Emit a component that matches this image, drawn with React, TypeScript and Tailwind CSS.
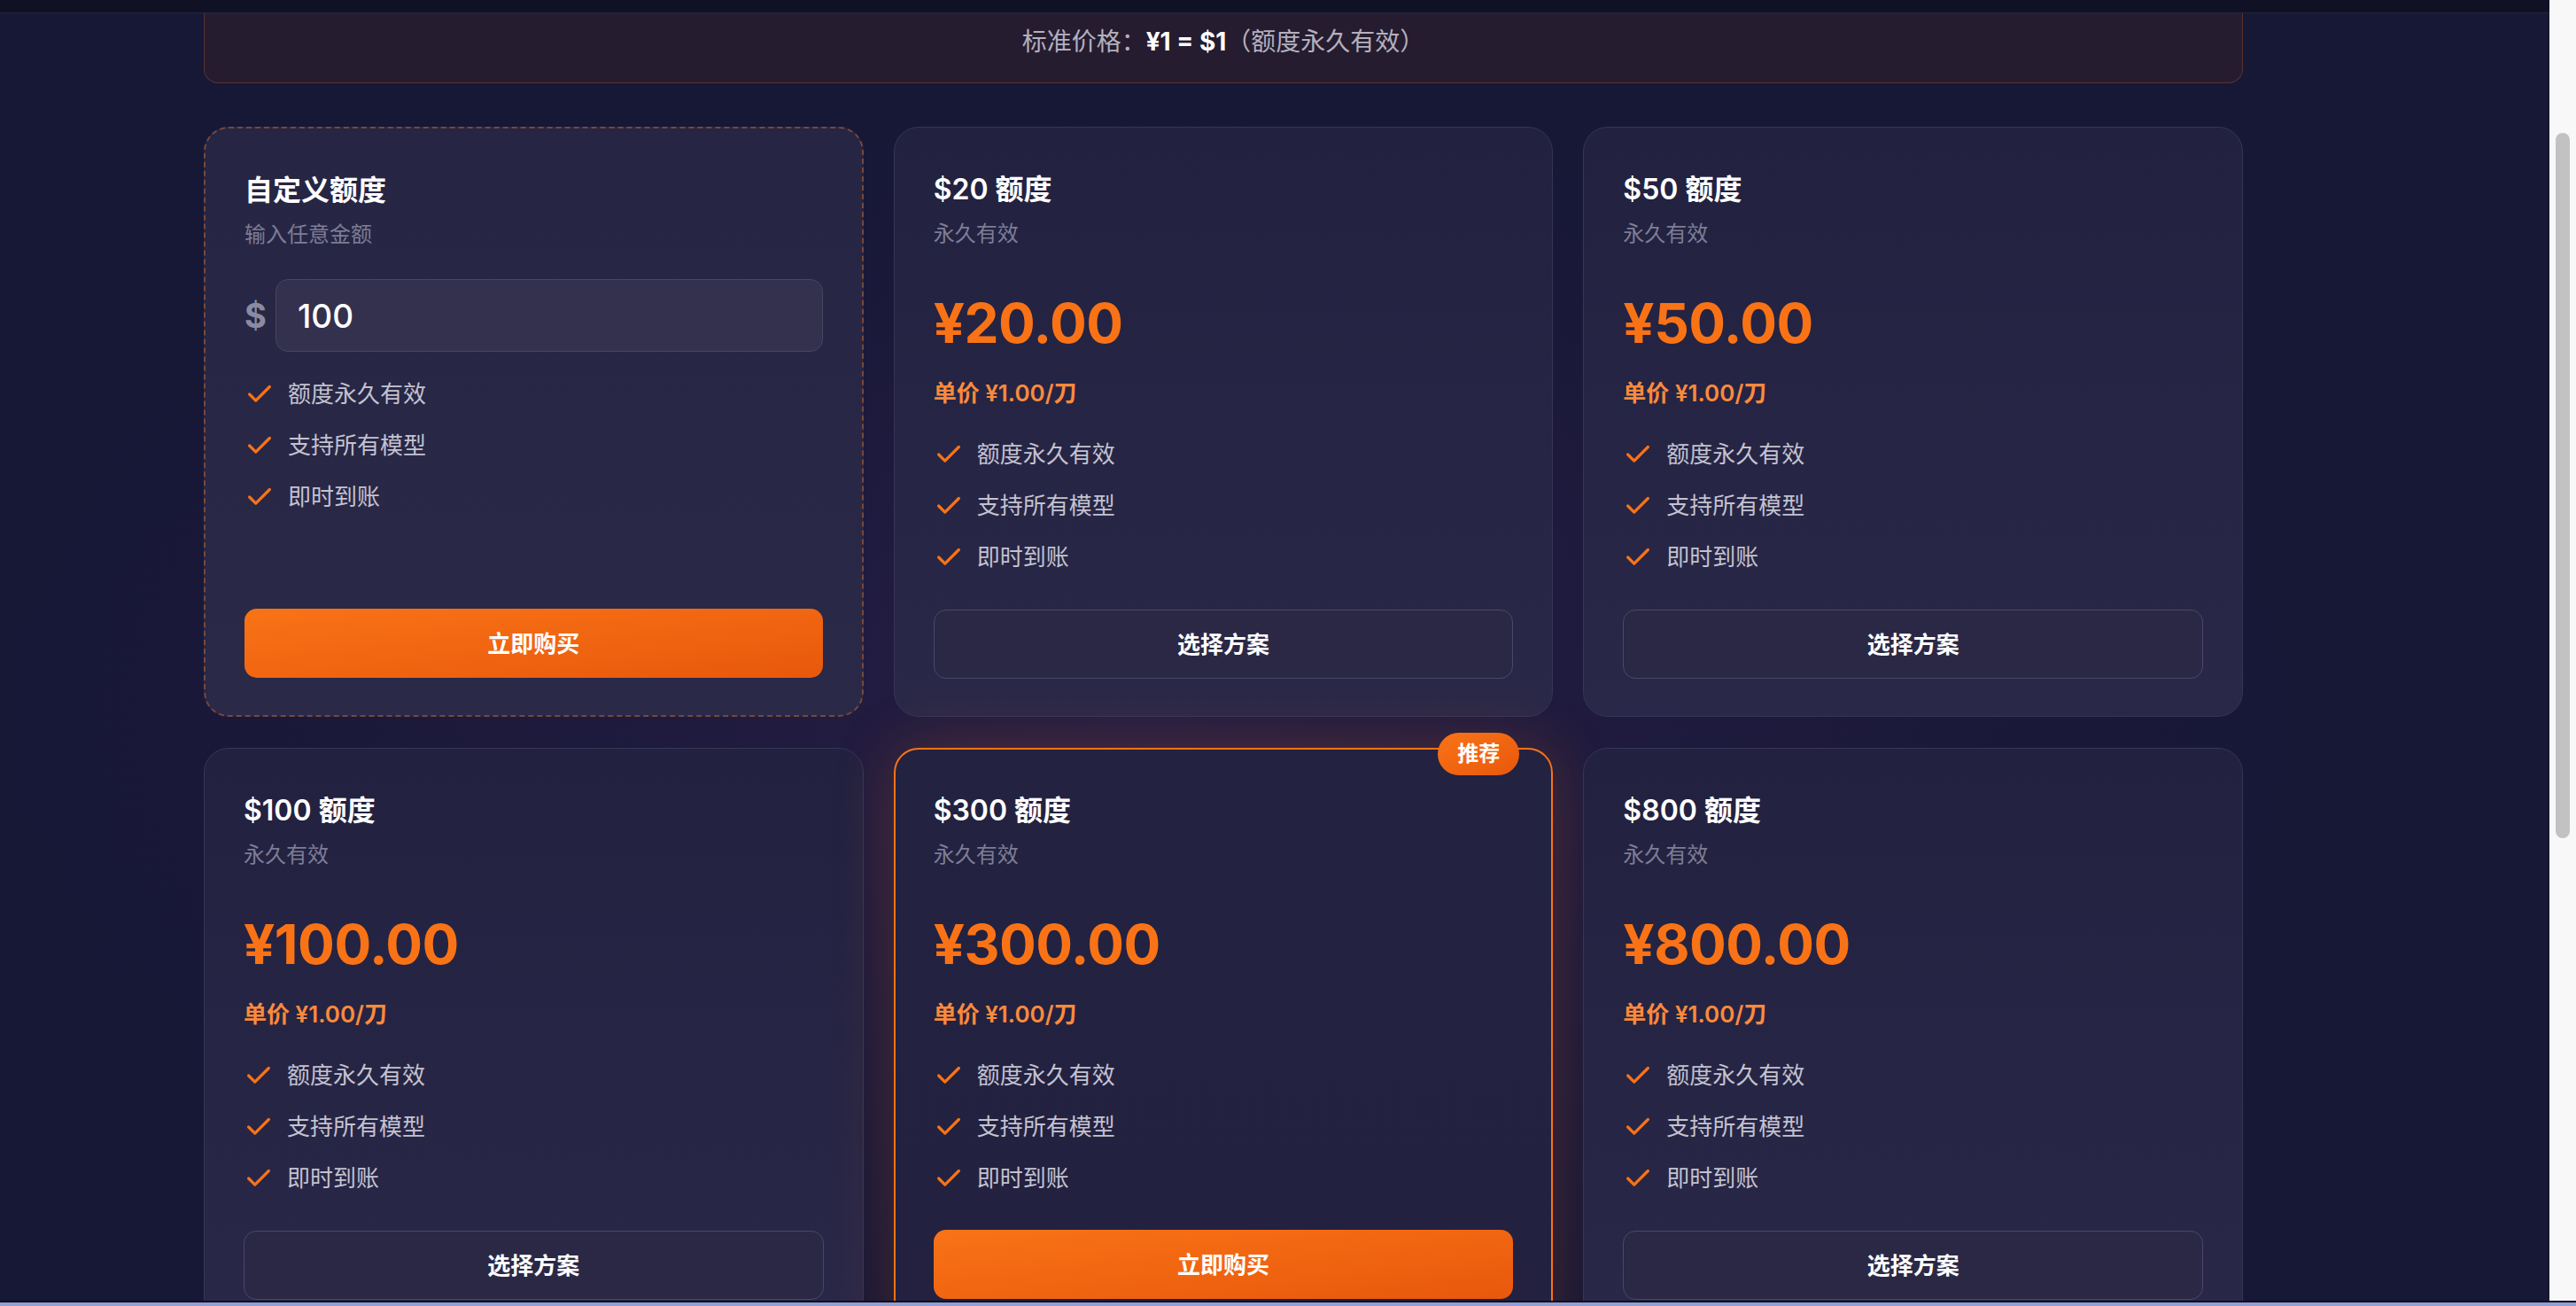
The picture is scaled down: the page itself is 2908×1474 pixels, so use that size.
import { Check } from "lucide-react"

type Plan = {
  usd: number
  hot?: boolean
}

const plans: Plan[] = [
  { usd: 20 },
  { usd: 50 },
  { usd: 100 },
  { usd: 300, hot: true },
  { usd: 800 },
]

const features = ["额度永久有效", "支持所有模型", "即时到账"]

const FeatureList = () => (
  <ul className="flex flex-col gap-[22px]">
    {features.map((f) => (
      <li key={f} className="flex items-center gap-[15px] text-[26px] leading-[36px] text-[#c3c2d0]">
        <Check size={34} strokeWidth={2.3} className="shrink-0 text-[#f97316]" />
        <span>{f}</span>
      </li>
    ))}
  </ul>
)

const BuyButton = ({ primary }: { primary: boolean }) =>
  primary ? (
    <button className="mt-auto flex h-[78px] w-full items-center justify-center rounded-[14px] bg-gradient-to-br from-[#f97316] to-[#e8580c] text-[26px] font-semibold text-white">
      立即购买
    </button>
  ) : (
    <button className="mt-auto flex h-[78px] w-full items-center justify-center rounded-[14px] border-[1.5px] border-[#4a4866] bg-[#2b2846] text-[26px] font-semibold text-white">
      选择方案
    </button>
  )

const CardHead = ({ title, sub }: { title: string; sub: string }) => (
  <>
    <h3 className="text-[32px] font-semibold leading-[48px] text-white">{title}</h3>
    <p className="mt-[10px] text-[24px] leading-[32px] text-[#7e7d95]">{sub}</p>
  </>
)

const CustomCard = () => (
  <div className="flex h-[666px] flex-col rounded-[28px] border-2 border-dashed border-[#7a4838] bg-gradient-to-b from-[#262544] to-[#2a2948] px-[44px] pb-[42px] pt-[46px]">
    <CardHead title="自定义额度" sub="输入任意金额" />
    <div className="mt-[34px] flex items-center gap-[10px]">
      <span className="text-[38px] font-bold text-[#8b8aa0]">$</span>
      <input
        defaultValue="100"
        className="h-[82px] min-w-0 flex-1 rounded-[14px] border-[1.5px] border-[#47455f] bg-[#33314e] px-[24px] text-[37px] font-medium text-white outline-none"
      />
    </div>
    <div className="mt-[30px]">
      <FeatureList />
    </div>
    <BuyButton primary />
  </div>
)

const PlanCard = ({ plan }: { plan: Plan }) => (
  <div
    className={
      plan.hot
        ? "relative flex h-[666px] flex-col rounded-[28px] border-2 border-[#f97316] bg-gradient-to-b from-[#232241] to-[#23213f] px-[43px] pb-[42px] pt-[45px] shadow-[0_0_70px_rgba(249,115,22,0.22)]"
        : "relative flex h-[666px] flex-col rounded-[28px] border-[1.5px] border-[#363556] bg-gradient-to-b from-[#222140] to-[#2a2848] px-[44px] pb-[42px] pt-[46px]"
    }
  >
    {plan.hot && (
      <span className="absolute -top-[19px] right-[36px] flex h-[48px] items-center rounded-full bg-gradient-to-br from-[#f97316] to-[#e8580c] px-[22px] text-[24px] font-bold text-white">
        推荐
      </span>
    )}
    <CardHead title={`$${plan.usd} 额度`} sub="永久有效" />
    <div className="mt-[49px] text-[62px] font-bold leading-[72px] tracking-[-0.5px] text-[#f97316]">
      ¥{plan.usd.toFixed(2)}
    </div>
    <div className="mt-[25px] text-[26px] font-semibold leading-[36px] text-[#fb8a3c]">单价 ¥1.00/刀</div>
    <div className="mt-[33px]">
      <FeatureList />
    </div>
    <BuyButton primary={!!plan.hot} />
  </div>
)

export default function App() {
  return (
    <div className="flex h-[1474px] w-[2908px] flex-col overflow-hidden bg-[#0e0e1a] font-['Inter','Noto_Sans_CJK_SC',sans-serif]">
      <div className="flex min-h-0 flex-1">
        <main className="flex min-w-0 flex-1 flex-col overflow-hidden bg-[#171736] bg-[radial-gradient(ellipse_at_45%_55%,rgba(60,40,90,0.35),transparent_60%)]">
          <div className="h-[15px] shrink-0 border-b border-[#25253d] bg-[#111126]" />
          <div className="ml-[230px] w-[2302px]">
            <div className="rounded-b-[16px] border-[1.5px] border-t-0 border-[#58332f] bg-[#251c30] pb-[26px] pt-[12px] text-center text-[28px] leading-[40px] text-[#b3b0bd]">
              标准价格：<span className="font-bold text-white">¥1 = $1</span>（额度永久有效）
            </div>
            <div className="mt-[49px] grid grid-cols-3 gap-x-[34px] gap-y-[35px]">
              <CustomCard />
              {plans.map((p) => (
                <PlanCard key={p.usd} plan={p} />
              ))}
            </div>
          </div>
        </main>
        <aside className="flex w-[30px] shrink-0 justify-center bg-[#f8f8f8] pt-[150px]">
          <div className="h-[796px] w-[16px] rounded-full bg-[#c2c2c2]" />
        </aside>
      </div>
      <div className="h-[6px] shrink-0 border-t-2 border-[#101018] bg-[#8f9fd8]" />
    </div>
  )
}
